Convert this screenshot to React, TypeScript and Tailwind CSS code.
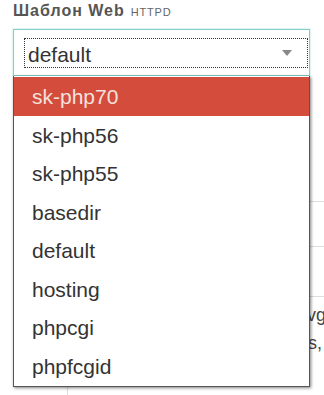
import React from "react";

const items = ["sk-php70", "sk-php56", "sk-php55", "basedir", "default", "hosting", "phpcgi", "phpfcgid"];

export default function App() {
  return (
    <div
      className="relative w-[324px] h-[395px] overflow-hidden bg-white flex flex-col"
      style={{ fontFamily: '"Liberation Sans", Arial, sans-serif' }}
    >
      <div className="h-[29px] shrink-0 pl-[13px] pt-[2px] flex items-baseline gap-[6px] leading-[18px]">
        <span className="text-[16px] font-bold text-[#555] tracking-[1px]">Шаблон Web</span>
        <span className="text-[11px] text-[#666] tracking-[0.8px]">HTTPD</span>
      </div>
      <div className="ml-[13px] w-[297px] h-[47px] shrink-0 border border-[#80d0c7] shadow-[0_0_2px_#a8e0da] pl-[10px] pr-[1px] pt-[8px] pb-[7px]">
        <div className="h-full border border-dotted border-[#333] flex items-center justify-between pl-[3px] pr-[15px] pt-[2px]">
          <span className="text-[21px] text-[#333] leading-none">default</span>
          <svg width="10" height="6" viewBox="0 0 10 6" className="-mt-[2px]">
            <path d="M0 0h10L5 6z" fill="#888" />
          </svg>
        </div>
      </div>
      <div className="flex-1 grid grid-cols-[68px_1fr]">
        <div className="border-r border-[#ddd]" />
        <div className="flex flex-col">
          <div className="h-[126px] border-b border-[#ddd]" />
          <div className="h-[45px] border-b border-[#ddd]" />
          <div className="h-[50px] border-b border-[#ddd]" />
          <div className="pt-[4px] pl-[239px] text-[18px] leading-[28px] text-[#444] whitespace-nowrap">
            <div>vg</div>
            <div className="pl-[1px]">s,</div>
          </div>
        </div>
      </div>
      <div className="absolute left-[13px] top-[76px] w-[297px] border border-[#555] border-t-0 bg-white shadow-[1px_1px_3px_rgba(0,0,0,0.5)] pt-[1px] flex flex-col">
        {items.map((it, i) => (
          <div
            key={it}
            className={
              i === 0
                ? "h-[39px] flex items-center pl-[18px] text-[21px] bg-[#d44c3b] text-[#f3e2de]"
                : "h-[38.5px] flex items-center pl-[18px] text-[21px] text-[#333]"
            }
          >
            {it}
          </div>
        ))}
      </div>
    </div>
  );
}
